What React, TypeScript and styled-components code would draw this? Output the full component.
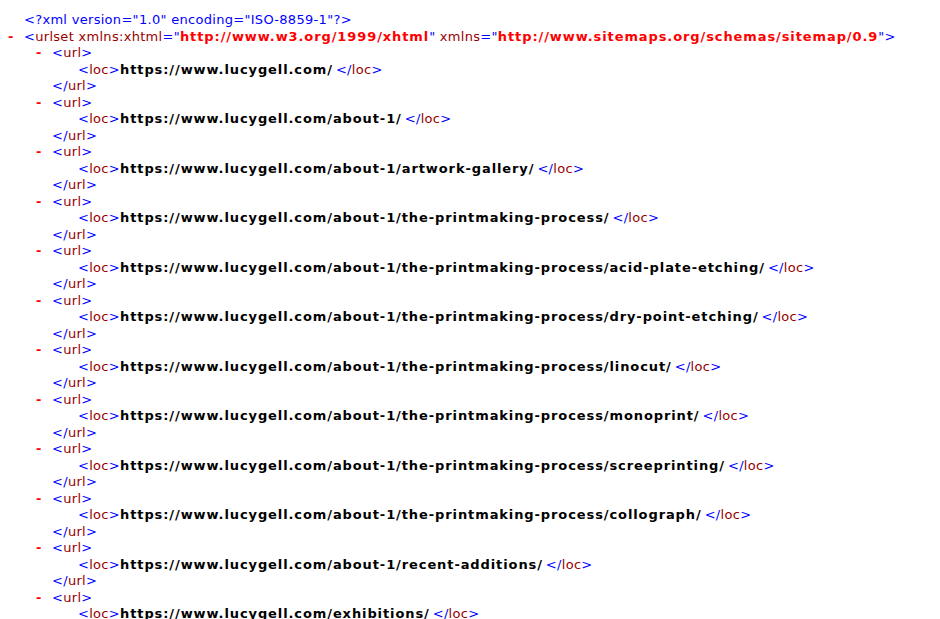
import React from "react";
import styled, { createGlobalStyle } from "styled-components";

const G = createGlobalStyle`
  body { margin: 0; background: #fff; font-family: "DejaVu Sans", Verdana, sans-serif; font-size: 13px; letter-spacing: 0.3px; }
`;
const Page = styled.div`padding: 12px 0 0 0; display: flex; flex-direction: column;`;
const Line = styled.div<{ $indent: number }>`
  display: flex; height: 16.5px; line-height: 16.5px; white-space: pre;
  padding-left: ${p => p.$indent}px;
`;
const Dash = styled.span`color: #ff0000; width: 16px; display: inline-block; font-weight: bold;`;
const B = styled.span`color: #0000ff;`;
const N = styled.span`color: #990000;`;
const V = styled.span`color: #ff0000; font-weight: bold; letter-spacing: 0.9px;`;
const T = styled.span`color: #000; font-weight: bold; letter-spacing: 0.9px; margin-right: 3px;`;

const urls = [
  "",
  "about-1/",
  "about-1/artwork-gallery/",
  "about-1/the-printmaking-process/",
  "about-1/the-printmaking-process/acid-plate-etching/",
  "about-1/the-printmaking-process/dry-point-etching/",
  "about-1/the-printmaking-process/linocut/",
  "about-1/the-printmaking-process/monoprint/",
  "about-1/the-printmaking-process/screeprinting/",
  "about-1/the-printmaking-process/collograph/",
  "about-1/recent-additions/",
  "exhibitions/",
];

export default function App() {
  return (
    <Page>
      <G />
      <Line $indent={24}><B>&lt;?xml version="1.0" encoding="ISO-8859-1"?&gt;</B></Line>
      <Line $indent={8}>
        <Dash>-</Dash><B>&lt;</B><N>urlset xmlns:xhtml</N><B>="</B><V>http://www.w3.org/1999/xhtml</V><B>"</B>
        <N> xmlns</N><B>="</B><V>http://www.sitemaps.org/schemas/sitemap/0.9</V><B>"&gt;</B>
      </Line>
      {urls.map((u, i) => (
        <React.Fragment key={i}>
          <Line $indent={36}><Dash>-</Dash><B>&lt;</B><N>url</N><B>&gt;</B></Line>
          <Line $indent={78}><B>&lt;</B><N>loc</N><B>&gt;</B><T>https://www.lucygell.com/{u}</T><B>&lt;/</B><N>loc</N><B>&gt;</B></Line>
          <Line $indent={52}><B>&lt;/</B><N>url</N><B>&gt;</B></Line>
        </React.Fragment>
      ))}
    </Page>
  );
}
